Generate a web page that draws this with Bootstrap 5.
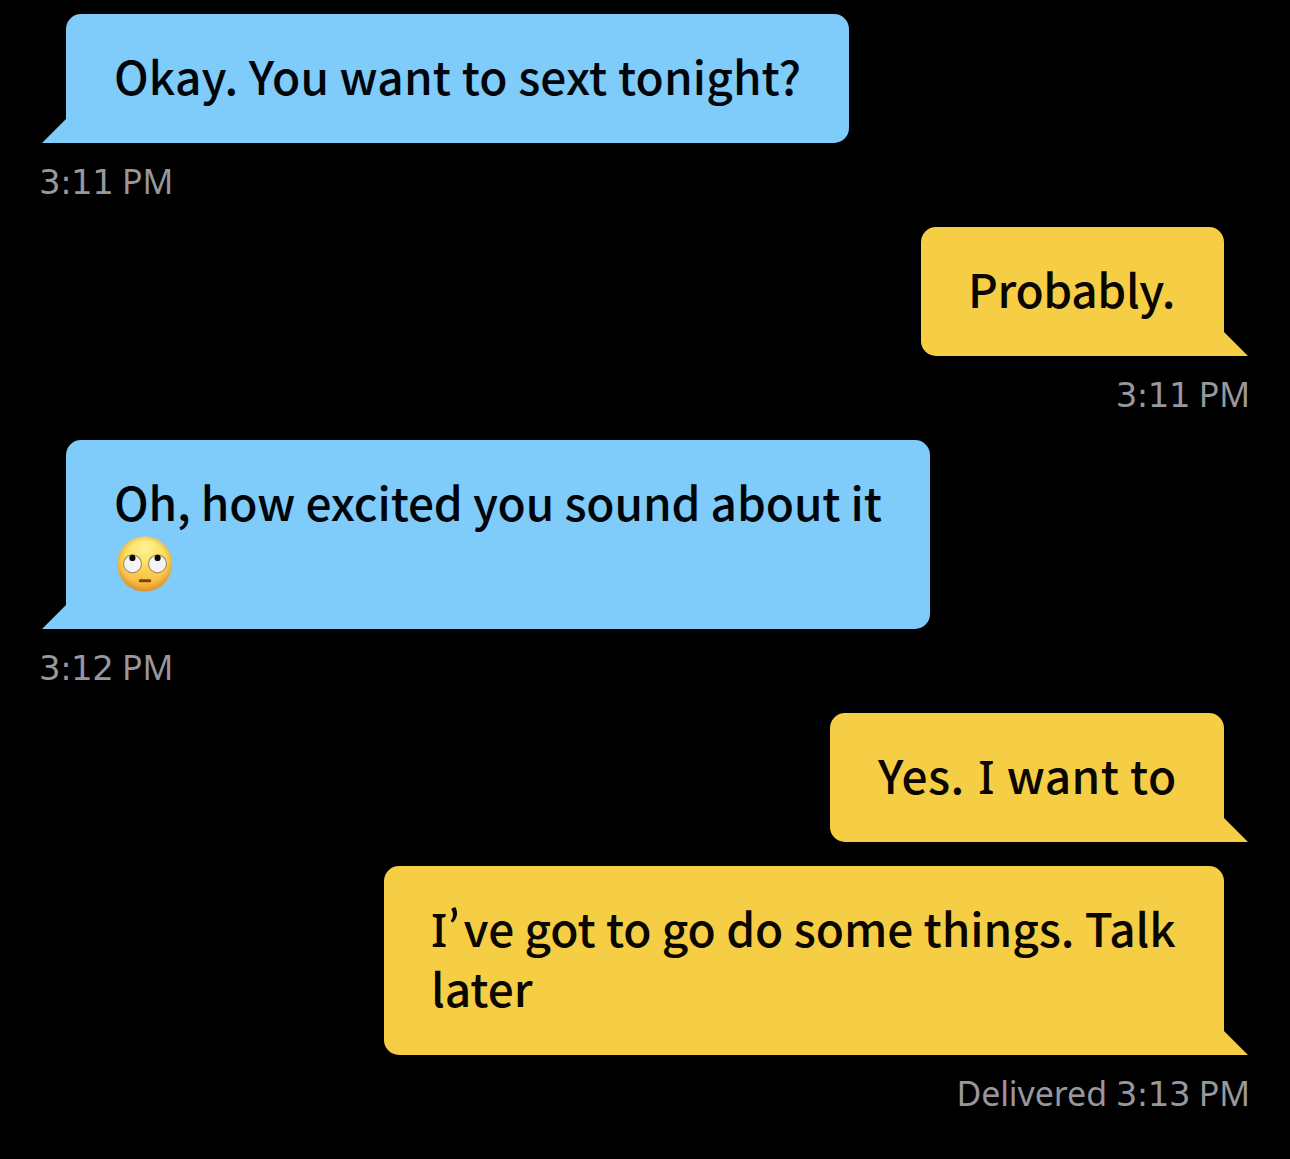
<!DOCTYPE html>
<html lang="en">
<head>
<meta charset="utf-8">
<meta name="viewport" content="width=device-width, initial-scale=1">
<title>Messages</title>
<link rel="stylesheet" href="https://cdn.jsdelivr.net/npm/bootstrap@5.3.0/dist/css/bootstrap.min.css">
<style>
  body { font-family: "Noto Sans CJK SC", "Noto Sans", sans-serif; overflow: hidden; }
  .chat { padding: 14px 66px 0; }
  .bubble { padding: 31px 0 38px 48px; border-radius: 15px; font-size: 46px; font-weight: 500; line-height: 60px; color: #01050a; white-space: nowrap; }
  .bubble .line { display: block; height: 60px; }
  .received { background: #7fcbf9; border-bottom-left-radius: 0; }
  .sent { background: #f5ce46; border-bottom-right-radius: 0; color: #0a0600; }
  .bubble::after { content: ""; position: absolute; bottom: 0; width: 24px; height: 24px; background: inherit; }
  .received::after { left: -24px; clip-path: polygon(100% 0, 100% 100%, 0 100%); }
  .sent::after { right: -24px; clip-path: polygon(0 0, 100% 100%, 0 100%); }
  .serif-i { font-family: "Noto Sans", sans-serif; }
  .w-4 .serif-i { margin: 0 1px 0 3px; }
  .curly { font-family: Lato, sans-serif; font-size: 52px; line-height: 0; margin: 0 4px 0 1px; }
  .emoji { width: 56px; height: 56px; margin: 5px 0 -1px 3px; }
  .w-1 { width: 783px; letter-spacing: .14px; }
  .w-2 { width: 303px; letter-spacing: -.35px; padding-left: 47px; }
  .w-3 { width: 864px; letter-spacing: -.12px; }
  .w-4 { width: 394px; letter-spacing: .4px; }
  .w-5 { width: 840px; letter-spacing: -.04px; padding-left: 47px; }
  .stamp { height: 84px; margin: 0 -27px; font-family: "Noto Sans", sans-serif; font-size: 34px; line-height: 77px; letter-spacing: -.1px; color: #98979d; white-space: pre; }
  .stamp.align-self-end { margin-right: -26px; }
  .stamp .num { font-family: "DejaVu Sans", sans-serif; font-size: 34px; letter-spacing: -.5px; line-height: 0; }
</style>
</head>
<body class="bg-black">
<main class="chat d-flex flex-column">
  <div class="bubble received position-relative align-self-start w-1"><span class="line">Okay. You want to sext tonight?</span></div>
  <div class="stamp align-self-start"><span class="num">3:11</span> PM</div>

  <div class="bubble sent position-relative align-self-end w-2"><span class="line">Probably.</span></div>
  <div class="stamp align-self-end"><span class="num">3:11</span> PM</div>

  <div class="bubble received position-relative align-self-start w-3">
    <span class="line">Oh, how excited you sound about it</span>
    <svg class="emoji d-block" viewBox="0 0 56 56" role="img" aria-label="Face with rolling eyes">
      <defs>
        <linearGradient id="face" x1="0" y1="0" x2="0" y2="1"><stop offset="0" stop-color="#fbe36a"/><stop offset=".5" stop-color="#fcdc5a"/><stop offset="1" stop-color="#f3ae3a"/></linearGradient>
        <radialGradient id="rim" cx=".5" cy=".46" r=".54"><stop offset=".7" stop-color="#e59a2c" stop-opacity="0"/><stop offset="1" stop-color="#d08a30" stop-opacity=".8"/></radialGradient>
        <radialGradient id="shine" cx=".5" cy=".22" r=".35"><stop offset="0" stop-color="#fff9a8" stop-opacity=".75"/><stop offset="1" stop-color="#fff59b" stop-opacity="0"/></radialGradient>
      </defs>
      <circle cx="27.7" cy="28" r="27.5" fill="url(#face)"/>
      <circle cx="27.7" cy="28" r="27.5" fill="url(#shine)"/>
      <circle cx="27.7" cy="28" r="27.5" fill="url(#rim)"/>
      <g fill="#f4f4f6" stroke="#ad935f" stroke-width="1.3"><circle cx="15.5" cy="27.8" r="9"/><circle cx="40.5" cy="27.8" r="9"/></g>
      <g fill="#0b0805"><circle cx="15.4" cy="21.9" r="3.1"/><circle cx="40.6" cy="21.9" r="3.1"/></g>
      <rect x="21.8" y="43.2" width="12.4" height="3" rx="1.5" fill="#7b430c"/>
    </svg>
  </div>
  <div class="stamp align-self-start"><span class="num">3:12</span> PM</div>

  <div class="bubble sent position-relative align-self-end w-4 mb-4"><span class="line">Yes. <span class="serif-i">I</span> want to</span></div>

  <div class="bubble sent position-relative align-self-end w-5">
    <span class="line"><span class="serif-i">I</span><span class="curly">’</span>ve got to go do some things. Talk</span>
    <span class="line">later</span>
  </div>
  <div class="stamp align-self-end">Delivered <span class="num">3:13</span> PM</div>
</main>
<script src="https://cdn.jsdelivr.net/npm/bootstrap@5.3.0/dist/js/bootstrap.bundle.min.js"></script>
</body>
</html>
